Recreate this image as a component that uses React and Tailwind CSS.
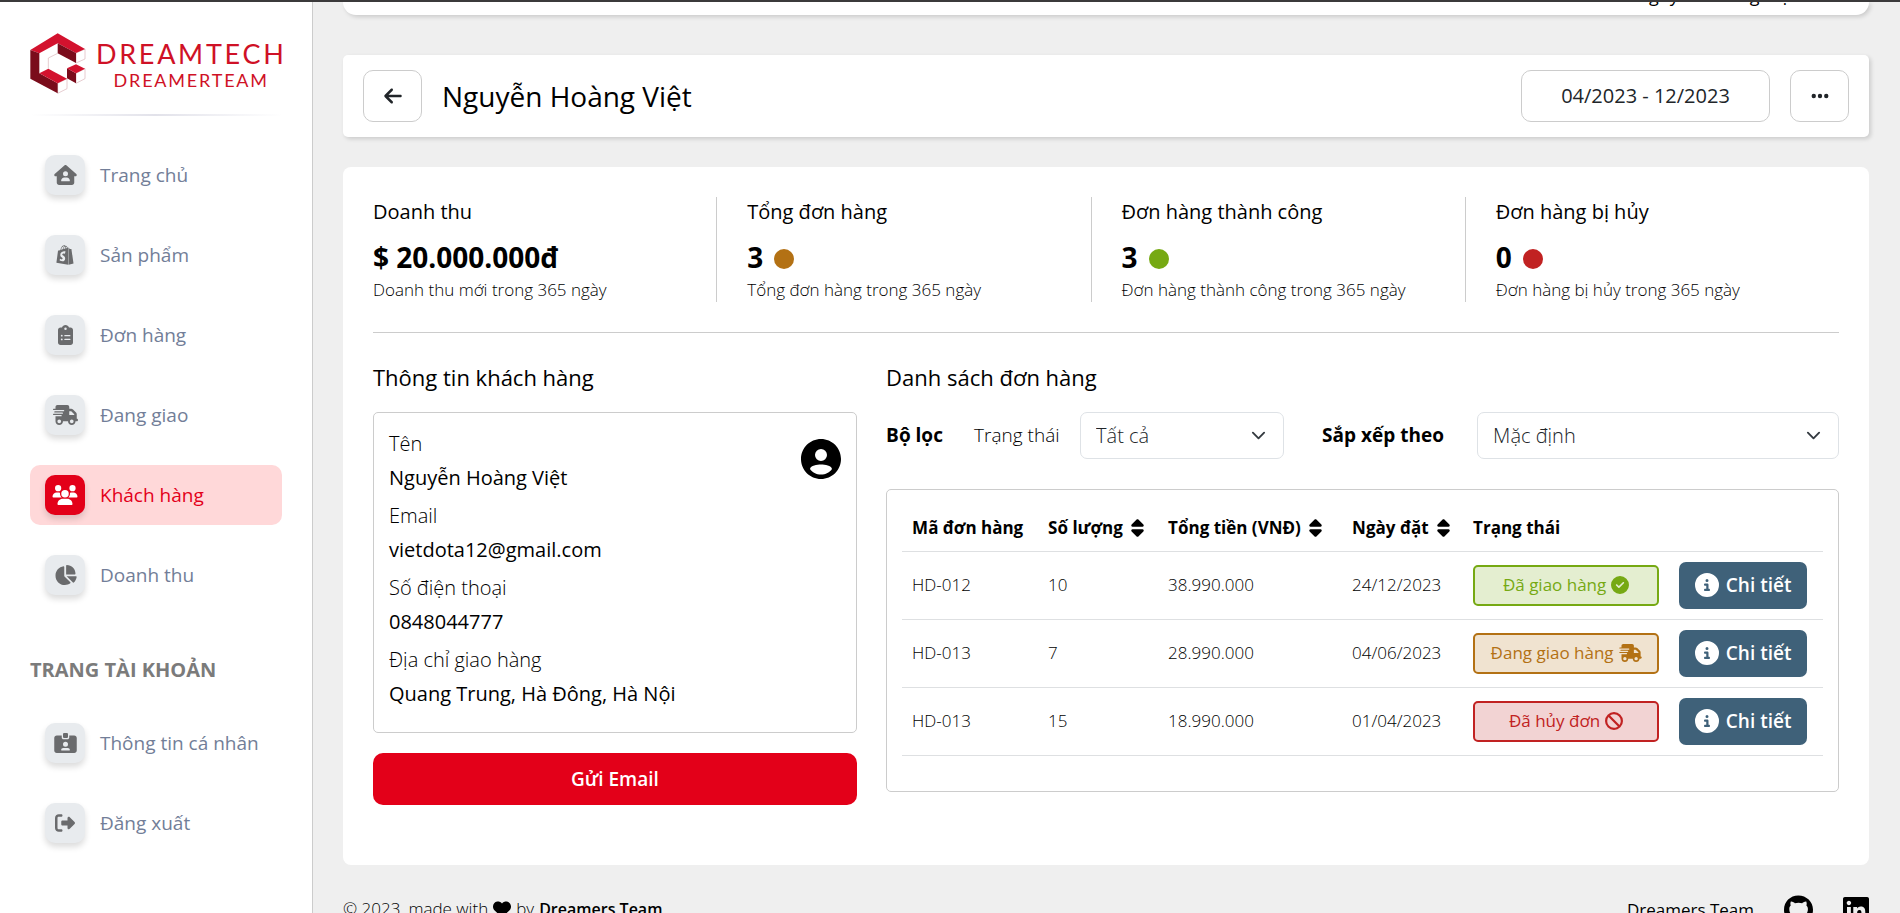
import React from "react";
import {
  FaHouseUser, FaShopify, FaClipboardList, FaTruckFast, FaUsers, FaChartPie, FaIdCardClip,
  FaRightFromBracket, FaArrowLeft, FaEllipsis, FaCircleCheck, FaBan, FaCircleInfo, FaHeart,
  FaGithub, FaLinkedin, FaSort,
} from "react-icons/fa6";

const mainLinks = [
  { label: "Trang chủ", icon: FaHouseUser, iconWidth: "w-[23px]" },
  { label: "Sản phẩm", icon: FaShopify, iconWidth: "w-[18px]" },
  { label: "Đơn hàng", icon: FaClipboardList, iconWidth: "w-[15px]" },
  { label: "Đang giao", icon: FaTruckFast, iconWidth: "w-[25px]" },
  { label: "Khách hàng", icon: FaUsers, iconWidth: "w-[26px]", active: true },
  { label: "Doanh thu", icon: FaChartPie, iconWidth: "w-[23px]" },
];

const accountLinks = [
  { label: "Thông tin cá nhân", icon: FaIdCardClip, iconWidth: "w-[23px]" },
  { label: "Đăng xuất", icon: FaRightFromBracket, iconWidth: "w-5" },
];

const stats = [
  { title: "Doanh thu", value: "$ 20.000.000đ", note: "Doanh thu mới trong 365 ngày" },
  { title: "Tổng đơn hàng", value: "3", dot: "bg-[#b37114]", note: "Tổng đơn hàng trong 365 ngày" },
  { title: "Đơn hàng thành công", value: "3", dot: "bg-[#76a913]", note: "Đơn hàng thành công trong 365 ngày" },
  { title: "Đơn hàng bị hủy", value: "0", dot: "bg-[#c12222]", note: "Đơn hàng bị hủy trong 365 ngày" },
];

const customer = [
  ["Tên", "Nguyễn Hoàng Việt"],
  ["Email", "vietdota12@gmail.com"],
  ["Số điện thoại", "0848044777"],
  ["Địa chỉ giao hàng", "Quang Trung, Hà Đông, Hà Nội"],
];

const statuses = {
  done: { label: "Đã giao hàng", icon: FaCircleCheck, iconWidth: "w-[18px]", style: "border-[#76a913] bg-[#e4eed0] text-[#76a913]" },
  shipping: { label: "Đang giao hàng", icon: FaTruckFast, iconWidth: "w-[23px]", style: "border-[#b37114] bg-[#f0e3d0] text-[#b37114]" },
  cancelled: { label: "Đã hủy đơn", icon: FaBan, iconWidth: "w-[18px]", style: "border-[#c12222] bg-[#f2d3d3] text-[#c12222]" },
};

const orders = [
  { id: "HD-012", quantity: "10", total: "38.990.000", date: "24/12/2023", status: "done" },
  { id: "HD-013", quantity: "7", total: "28.990.000", date: "04/06/2023", status: "shipping" },
  { id: "HD-013", quantity: "15", total: "18.990.000", date: "01/04/2023", status: "cancelled" },
];

const columns = [
  { label: "Mã đơn hàng", width: "w-[136px]" },
  { label: "Số lượng", width: "w-[120px]", sortable: true },
  { label: "Tổng tiền (VNĐ)", width: "w-[184px]", sortable: true },
  { label: "Ngày đặt", width: "w-[121px]", sortable: true },
  { label: "Trạng thái", width: "w-[206px]" },
];

function LogoMark() {
  return (
    <svg viewBox="93 97 168 183" className="h-[61px] w-14 shrink-0" aria-hidden="true">
      <g fill="#fff" stroke="#d9b3b8" strokeWidth="2" strokeLinejoin="round">
        <path d="M231 157l27-12v30l-27 12z" />
        <path d="M176 248l28-14v30l-28 14z" />
        <path d="M231 218l27-14v30l-27 14z" />
        <path d="M176 158l-28 14v32" fill="none" />
      </g>
      <path fill="#d3122e" d="M94 148l82-50 82 47-27 12-55-29-55 30z" />
      <path fill="#7a0c1b" d="M176 128l55 29v30l-55-29z" />
      <path fill="#7a0c1b" d="M94 148l27 10v60l55 30v30l-82-44z" />
      <path fill="#d3122e" d="M121 218l27-14 56 30-28 14z" />
      <path fill="#7a0c1b" d="M204 203l27 15v30l-27-15z" />
      <path fill="#d3122e" d="M204 203l27-12 27 13-27 14z" />
    </svg>
  );
}

function NavItem({ label, icon: Icon, iconWidth, active }) {
  return (
    <li>
      <a
        href="#"
        aria-current={active ? "page" : undefined}
        className={
          "flex h-[60px] items-center gap-[15px] rounded-[10px] px-[15px] text-[19px] leading-6 whitespace-nowrap " +
          (active ? "bg-[#ffd8d9] font-medium text-[#e30019]" : "text-[#727e98]")
        }
      >
        <span
          className={
            "flex size-10 shrink-0 items-center justify-center rounded-[10px] shadow-[0_4px_6px_rgba(0,0,0,0.14)] " +
            (active ? "bg-[#e30019] text-white" : "bg-[#e8ebee] text-[#6a6b6d]")
          }
        >
          <Icon className={"h-5 " + iconWidth} />
        </span>
        {label}
      </a>
    </li>
  );
}

function Sidebar() {
  return (
    <aside className="w-[313px] shrink-0 border-r border-[#ccc] bg-white px-[30px] pt-[31px]">
      <a href="#" className="flex items-center gap-[10px]">
        <LogoMark />
        <span className="flex flex-col items-center pt-1 whitespace-nowrap font-[Lato] text-[#cf1126]">
          <span className="text-[27px] leading-7 tracking-widest">DREAMTECH</span>
          <span className="text-lg leading-6 tracking-widest">DREAMERTEAM</span>
        </span>
      </a>
      <div className="mt-5 h-0.5 bg-linear-to-r from-transparent via-[#e2e2ea] to-transparent" />
      <nav className="mt-[29px]">
        <ul className="flex flex-col gap-5">
          {mainLinks.map((link) => <NavItem key={link.label} {...link} />)}
        </ul>
        <h2 className="mt-[50px] text-xl leading-[30px] font-bold text-[#7b7b7b]">TRANG TÀI KHOẢN</h2>
        <ul className="mt-7 flex flex-col gap-5">
          {accountLinks.map((link) => <NavItem key={link.label} {...link} />)}
        </ul>
      </nav>
    </aside>
  );
}

function Stat({ title, value, dot, note }) {
  return (
    <div className="flex-1 border-r border-[#ccc] pl-[30px] last:border-r-0">
      <h3 className="text-xl leading-[30px] font-medium">{title}</h3>
      <p className="mt-[9px] flex items-center gap-[11px] text-[28px] leading-[42px] font-bold">
        {value}
        {dot && <span className={"mt-1 size-5 rounded-full " + dot} />}
      </p>
      <p className="text-[17px] leading-6 font-light">{note}</p>
    </div>
  );
}

function Select({ id, label, className }) {
  return (
    <span className={"relative " + className}>
      <select id={id} className="block h-[47px] w-full appearance-none rounded-[7px] border border-[#dee2e6] bg-white px-[15px] text-xl font-light text-[#212529]">
        <option>{label}</option>
      </select>
      <svg viewBox="0 0 16 16" className="pointer-events-none absolute top-4 right-[18px] size-[15px]" fill="none" stroke="#343a40" strokeWidth="2" strokeLinecap="round" strokeLinejoin="round" aria-hidden="true">
        <path d="m2 5 6 6 6-6" />
      </svg>
    </span>
  );
}

function CustomerInfo() {
  return (
    <section className="w-[33%]">
      <h2 className="text-[22px] leading-8 font-medium">Thông tin khách hàng</h2>
      <div className="mt-[19px] flex items-start justify-between rounded-[5px] border border-[#ccc] px-[15px] pt-[14px] pb-[21px]">
        <dl>
          {customer.map(([term, value]) => (
            <div key={term} className="mb-1 text-xl leading-[34px] last:mb-0">
              <dt className="font-light">{term}</dt>
              <dd className="font-medium">{value}</dd>
            </div>
          ))}
        </dl>
        <svg viewBox="2 2 20 20" className="mt-3 size-10 shrink-0" aria-hidden="true">
          <path d="M12 2C6.48 2 2 6.48 2 12s4.48 10 10 10 10-4.480 10-10S17.520 2 12 2zm0 5a3 3 0 1 1 0 6 3 3 0 0 1 0-6zm0 12.800c-2.300 0-4.400-1.100-5.500-2.800.300-1.600 3.500-2.200 5.500-2.200s5.200.600 5.500 2.200c-1.100 1.700-3.200 2.800-5.500 2.800z" />
        </svg>
      </div>
      <button type="button" className="mt-5 h-[52px] w-full rounded-[10px] bg-[#e30019] text-[19px] font-semibold text-white">Gửi Email</button>
    </section>
  );
}

function OrderList() {
  return (
    <section className="w-[65%]">
      <h2 className="text-[22px] leading-8 font-medium">Danh sách đơn hàng</h2>
      <div className="mt-[19px] flex items-center text-[19px] whitespace-nowrap">
        <span className="w-[88px] font-bold">Bộ lọc</span>
        <label htmlFor="status" className="w-[106px] font-light">Trạng thái</label>
        <Select id="status" label="Tất cả" className="w-[204px]" />
        <label htmlFor="sort" className="ml-[38px] w-[155px] font-bold">Sắp xếp theo</label>
        <Select id="sort" label="Mặc định" className="flex-1" />
      </div>
      <div className="mt-[30px] rounded-[5px] border border-[#ccc] p-[15px]">
        <table className="mb-5 w-full text-left text-[17px] whitespace-nowrap">
          <thead>
            <tr className="h-[46px] border-b border-[#dee0e2]">
              {columns.map(({ label, width, sortable }) => (
                <th key={label} className={"pl-[10px] font-bold " + width}>
                  {sortable ? (
                    <button type="button" className="flex items-center gap-2">
                      {label}
                      <FaSort className="h-5 w-[13px]" />
                    </button>
                  ) : label}
                </th>
              ))}
              <th />
            </tr>
          </thead>
          <tbody>
            {orders.map((order, index) => {
              const { label, icon: Icon, iconWidth, style } = statuses[order.status];
              return (
                <tr key={index} className="h-[68px] border-b border-[#dee0e2]">
                  <td className="pl-[10px] font-light">{order.id}</td>
                  <td className="pl-[10px] font-light">{order.quantity}</td>
                  <td className="pl-[10px] font-light">{order.total}</td>
                  <td className="pl-[10px] font-light">{order.date}</td>
                  <td className="px-[10px]">
                    <span className={"flex h-[41px] items-center justify-center gap-[5px] rounded-[5px] border-2 font-medium " + style}>
                      {label}
                      <Icon className={"h-[18px] " + iconWidth} />
                    </span>
                  </td>
                  <td className="pl-[10px]">
                    <button type="button" className="flex h-[47px] w-32 items-center justify-center gap-[7px] rounded-[7px] bg-[#3f6179] text-[19px] font-semibold text-white">
                      <FaCircleInfo className="size-6" />
                      Chi tiết
                    </button>
                  </td>
                </tr>
              );
            })}
          </tbody>
        </table>
      </div>
    </section>
  );
}

export default function App() {
  return (
    <div className="flex h-screen overflow-hidden border-t-2 border-[#3b3a3b] bg-[#efefef] font-['Open_Sans',sans-serif] text-black">
      <Sidebar />
      <main className="min-w-0 flex-1 pr-[31px] pl-[30px]">
        <div className="flex h-[13px] items-end justify-end overflow-hidden rounded-b-[15px] bg-white pr-[73px] pb-[8px] text-lg leading-6 font-medium shadow-[2px_2px_4px_rgba(0,0,0,0.15)]">
          Nguyễn Hoàng Việt
        </div>
        <header className="mt-10 flex items-center gap-5 rounded-[5px] bg-white px-5 py-[15px] shadow-[2px_2px_4px_rgba(0,0,0,0.15)]">
          <button type="button" aria-label="Quay lại" className="flex h-[52px] w-[59px] items-center justify-center rounded-[10px] border border-[#ccc] text-xl text-[#212529]">
            <FaArrowLeft />
          </button>
          <h1 className="flex-1 text-[28px] leading-9 font-medium">Nguyễn Hoàng Việt</h1>
          <button type="button" className="h-[52px] w-[249px] rounded-[10px] border border-[#ccc] text-xl font-medium text-[#212529]">04/2023 - 12/2023</button>
          <button type="button" aria-label="Thêm" className="flex h-[52px] w-[59px] items-center justify-center rounded-[10px] border border-[#ccc] text-xl text-[#212529]">
            <FaEllipsis />
          </button>
        </header>
        <div className="mt-[30px] rounded-lg bg-white px-[30px] pt-[30px] pb-[60px]">
          <div className="-ml-[30px] flex">
            {stats.map((stat) => <Stat key={stat.title} {...stat} />)}
          </div>
          <hr className="mt-[30px] border-[#ccc]" />
          <div className="mt-7 flex items-start justify-between">
            <CustomerInfo />
            <OrderList />
          </div>
        </div>
        <footer className="mt-[30px] flex items-start justify-between text-[17px] leading-7">
          <p className="flex items-center gap-[5px] font-light">
            © 2023, made with <FaHeart className="size-[18px]" /> by <strong className="text-base leading-7 font-semibold">Dreamers Team</strong>
          </p>
          <div className="flex items-center gap-[30px] font-medium">
            <a href="#">Dreamers Team</a>
            <a href="#" aria-label="GitHub"><FaGithub className="h-[30px] w-[29px]" /></a>
            <a href="#" aria-label="LinkedIn"><FaLinkedin className="h-[30px] w-[26px]" /></a>
          </div>
        </footer>
      </main>
    </div>
  );
}
